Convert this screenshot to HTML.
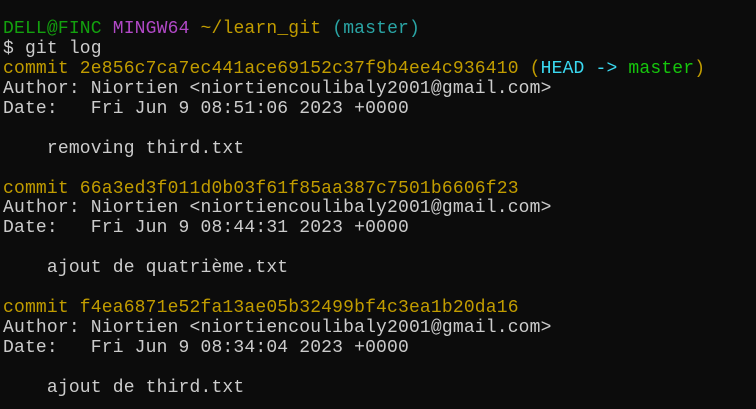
<!DOCTYPE html>
<html><head><meta charset="utf-8"><style>
html,body{margin:0;padding:0;background:#0c0c0c;width:756px;height:409px;overflow:hidden}
pre{margin:0;padding:20px 0 0 3px;font-family:"Liberation Mono",monospace;font-size:18px;letter-spacing:0.17px;line-height:19.94px;color:#cccccc}
.g{color:#13a10e}.m{color:#b148c6}.y{color:#c19c00}.t{color:#2aa5a5}.c{color:#3ad8f0}.bg{color:#16c60c}
</style></head><body><pre><span class="g">DELL@FINC</span> <span class="m">MINGW64</span> <span class="y">~/learn_git</span> <span class="t">(master)</span>
$ git log
<span class="y">commit 2e856c7ca7ec441ace69152c37f9b4ee4c936410 (</span><span class="c">HEAD -&gt; </span><span class="bg">master</span><span class="y">)</span>
Author: Niortien &lt;niortiencoulibaly2001@gmail.com&gt;
Date:   Fri Jun 9 08:51:06 2023 +0000

    removing third.txt

<span class="y">commit 66a3ed3f011d0b03f61f85aa387c7501b6606f23</span>
Author: Niortien &lt;niortiencoulibaly2001@gmail.com&gt;
Date:   Fri Jun 9 08:44:31 2023 +0000

    ajout de quatrième.txt

<span class="y">commit f4ea6871e52fa13ae05b32499bf4c3ea1b20da16</span>
Author: Niortien &lt;niortiencoulibaly2001@gmail.com&gt;
Date:   Fri Jun 9 08:34:04 2023 +0000

    ajout de third.txt
</pre></body></html>
